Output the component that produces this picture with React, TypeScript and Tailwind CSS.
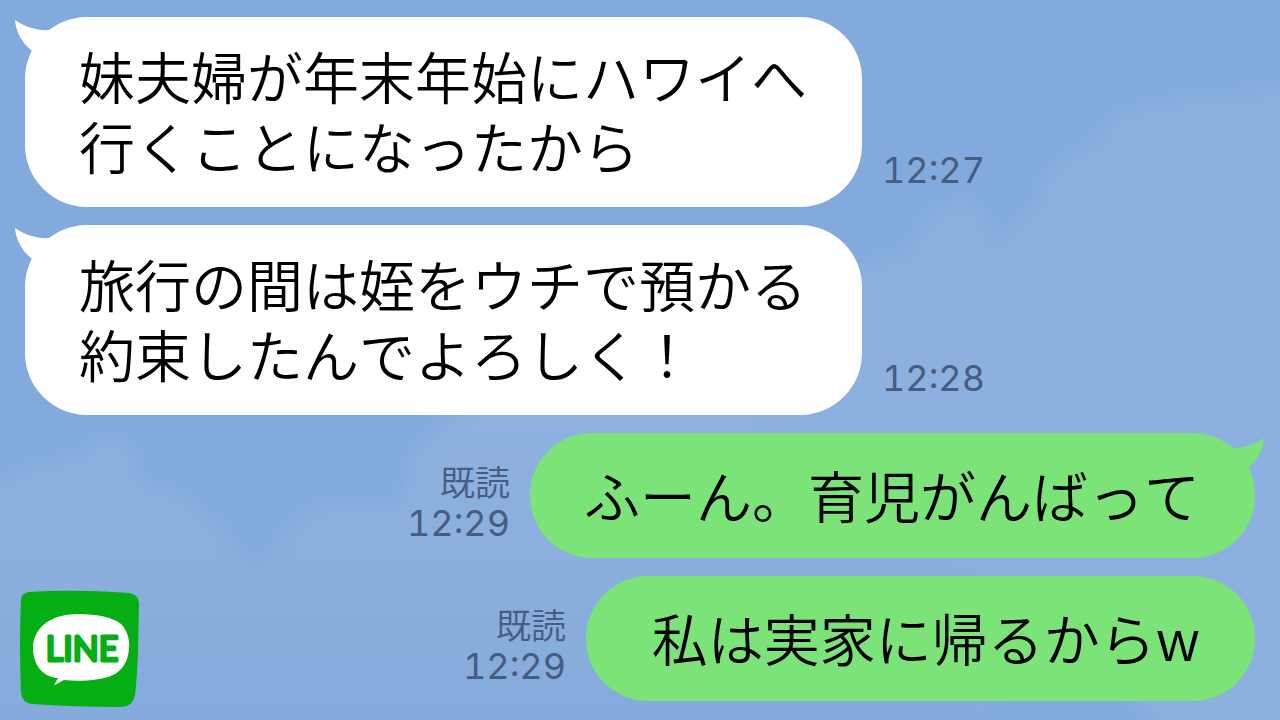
import type { ReactNode } from 'react'
import clsx from 'clsx'

type Message = {
  lines: string[]
  time: string
  mine?: boolean
  tail?: boolean
}

const messages: Message[] = [
  { lines: ['妹夫婦が年末年始にハワイへ', '行くことになったから'], time: '12:27', tail: true },
  { lines: ['旅行の間は姪をウチで預かる', '約束したんでよろしく！'], time: '12:28', tail: true },
  { lines: ['ふーん。育児がんばって'], time: '12:29', mine: true, tail: true },
  { lines: ['私は実家に帰るからw'], time: '12:29', mine: true },
]

function Sky() {
  return (
    <svg
      className="absolute inset-0 h-full w-full"
      viewBox="0 0 1280 720"
      preserveAspectRatio="xMidYMid slice"
      aria-hidden="true"
    >
      <defs>
        <filter id="soft" x="-20%" y="-20%" width="140%" height="140%">
          <feGaussianBlur stdDeviation="10" />
        </filter>
        <linearGradient id="fade" x1="0" y1="0" x2="0" y2="1">
          <stop offset="0" stopColor="#8eb1e0" />
          <stop offset="0.4" stopColor="#8bafde" />
          <stop offset="1" stopColor="#83aadc" />
        </linearGradient>
      </defs>
      <rect width="1280" height="720" fill="#82aadd" />
      <g filter="url(#soft)">
        <path
          d="M-40 496 L10 478 Q38 458 80 460 Q100 430 122 438 Q138 458 138 482 Q180 486 204 512 Q240 540 254 574 Q280 530 310 508 Q350 494 388 508 Q404 506 408 462 Q430 425 480 400 L1000 400 L1000 760 L-40 760 Z"
          fill="url(#fade)"
        />
        <path
          d="M780 275 L908 255 Q920 214 950 204 Q982 192 988 226 L998 254 Q1012 216 1040 203 Q1038 176 1064 158 Q1100 146 1112 118 Q1150 98 1220 96 L1320 84 L1320 760 L1180 760 Q1080 600 780 460 Z"
          fill="#8cb0df"
        />
      </g>
    </svg>
  )
}

function Tail({ mine }: { mine?: boolean }) {
  return (
    <svg
      className={clsx(
        'absolute h-8 w-10',
        mine ? '-right-[9px] top-[5px] -scale-x-100 text-[#7be378]' : '-left-[10px] top-[3px] text-white',
      )}
      viewBox="0 0 40 32"
      fill="currentColor"
      aria-hidden="true"
    >
      <path d="M0 0 C10 7 23 11 35 10 L40 14 L30 32 L17 31 C7 23 1 12 0 0 Z" />
    </svg>
  )
}

function Bubble({ mine, tail, children }: { mine?: boolean; tail?: boolean; children: ReactNode }) {
  return (
    <div
      className={clsx(
        'relative rounded-[62px] pr-[55px] pl-[54px] text-[56px] leading-[70px] whitespace-nowrap text-black',
        mine ? 'min-w-[669px] bg-[#7be378] pt-[26px] pb-[29px] text-right' : 'bg-white pt-[23px] pb-[27px]',
      )}
    >
      {tail && <Tail mine={mine} />}
      {children}
    </div>
  )
}

function Stamp({ time, mine }: { time: string; mine?: boolean }) {
  return (
    <div className={clsx('leading-[42px] text-[#465c80]', mine ? 'pb-[14px] text-right' : 'pb-4')}>
      {mine && <p className="text-[35px]">既読</p>}
      <time className="block font-['Inter',sans-serif] text-[36px] font-normal tabular-nums">{time}</time>
    </div>
  )
}

function LineLogo() {
  return (
    <svg
      className="absolute bottom-3 left-5 h-[118px] w-[120px]"
      viewBox="0 0 120 118"
      role="img"
      aria-label="LINE"
    >
      <path
        d="M9 2 Q55 -1 109 3 Q118 4 119 13 L118 62 Q117 88 115 105 Q113 116 102 117 Q55 117 12 114 Q2 113 1 102 Q-1 55 1 10 Q1 3 9 2 Z"
        fill="#04ae13"
      />
      <path
        d="M57 24 C79 24 94 28 101 34 C107 40 110 49 109 59 C108 71 103 80 93 85 C83 90 60 92 44 90 C41 91 38 94 34 95 L38 88 C22 87 13 74 13 58 C13 38 31 24 57 24 Z"
        fill="#fff"
      />
      <text
        x="62"
        y="71"
        textAnchor="middle"
        fontSize="34"
        fill="#04ae13"
        stroke="#04ae13"
        strokeWidth="3"
        strokeLinejoin="round"
        className="font-['Lato',sans-serif] font-normal"
      >
        LINE
      </text>
    </svg>
  )
}

export default function App() {
  return (
    <main
      lang="ja"
      className="relative min-h-screen overflow-hidden bg-[#82aadd] font-['Noto_Sans_CJK_JP',sans-serif] font-[350] [font-kerning:none]"
    >
      <Sky />
      <ul className="relative flex flex-col gap-[18px] px-[25px] py-[17px]">
        {messages.map((message) => (
          <li
            key={message.lines[0]}
            className={clsx('flex items-end gap-5', message.mine && 'flex-row-reverse')}
          >
            <Bubble mine={message.mine} tail={message.tail}>
              {message.lines.map((line) => (
                <p key={line}>{line}</p>
              ))}
            </Bubble>
            <Stamp time={message.time} mine={message.mine} />
          </li>
        ))}
      </ul>
      <LineLogo />
    </main>
  )
}
